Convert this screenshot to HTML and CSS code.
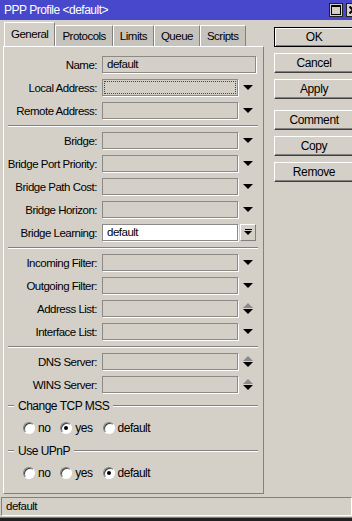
FILE: index.html
```html
<!DOCTYPE html>
<html lang="en">
<head>
  <meta charset="UTF-8" />
  <meta name="viewport" content="width=device-width, initial-scale=1.0" />
  <title>PPP Profile &lt;default&gt;</title>
  <link rel="stylesheet" href="styles.css">
</head>
<body>
  <div class="window">
    <div class="titlebar">
      <span class="title">PPP Profile &lt;default&gt;</span>
      <div class="win-buttons">
        <span class="win-btn"><span class="max-box"></span></span>
        <span class="win-btn">
          <svg width="8" height="8" viewBox="0 0 8 8"><path d="M0.5 0.5 L7.5 7.5 M7.5 0.5 L0.5 7.5" stroke="#000" stroke-width="2"/></svg>
        </span>
      </div>
    </div>

    <div class="main">
      <div class="left">
        <div class="tabs">
          <div class="tab active">General</div>
          <div class="tab">Protocols</div>
          <div class="tab">Limits</div>
          <div class="tab">Queue</div>
          <div class="tab">Scripts</div>
        </div>

        <div class="panel">
          <div class="row">
            <label>Name:</label>
            <div class="field wide">default</div>
          </div>
          <div class="row">
            <label>Local Address:</label>
            <div class="field"><span class="focus-ring"></span></div>
            <span class="arrow down"></span>
          </div>
          <div class="row">
            <label>Remote Address:</label>
            <div class="field"></div>
            <span class="arrow down"></span>
          </div>

          <div class="sep"></div>

          <div class="row">
            <label>Bridge:</label>
            <div class="field"></div>
            <span class="arrow down"></span>
          </div>
          <div class="row">
            <label>Bridge Port Priority:</label>
            <div class="field"></div>
            <span class="arrow down"></span>
          </div>
          <div class="row">
            <label>Bridge Path Cost:</label>
            <div class="field"></div>
            <span class="arrow down"></span>
          </div>
          <div class="row">
            <label>Bridge Horizon:</label>
            <div class="field"></div>
            <span class="arrow down"></span>
          </div>
          <div class="row">
            <label>Bridge Learning:</label>
            <div class="field white">default</div>
            <span class="drop-btn"><span class="bar"></span><span class="tri"></span></span>
          </div>

          <div class="sep"></div>

          <div class="row">
            <label>Incoming Filter:</label>
            <div class="field"></div>
            <span class="arrow down"></span>
          </div>
          <div class="row">
            <label>Outgoing Filter:</label>
            <div class="field"></div>
            <span class="arrow down"></span>
          </div>
          <div class="row">
            <label>Address List:</label>
            <div class="field"></div>
            <span class="arrow updown"></span>
          </div>
          <div class="row">
            <label>Interface List:</label>
            <div class="field"></div>
            <span class="arrow down"></span>
          </div>

          <div class="sep"></div>

          <div class="row">
            <label>DNS Server:</label>
            <div class="field"></div>
            <span class="arrow updown"></span>
          </div>
          <div class="row">
            <label>WINS Server:</label>
            <div class="field"></div>
            <span class="arrow updown"></span>
          </div>

          <div class="group-title">Change TCP MSS</div>
          <div class="radios">
            <span class="radio"></span><span class="radio-label">no</span>
            <span class="radio checked"></span><span class="radio-label">yes</span>
            <span class="radio"></span><span class="radio-label">default</span>
          </div>

          <div class="group-title">Use UPnP</div>
          <div class="radios">
            <span class="radio"></span><span class="radio-label">no</span>
            <span class="radio"></span><span class="radio-label">yes</span>
            <span class="radio checked"></span><span class="radio-label">default</span>
          </div>
        </div>
      </div>

      <div class="buttons">
        <button class="default">OK</button>
        <button>Cancel</button>
        <button class="gap-after">Apply</button>
        <button>Comment</button>
        <button>Copy</button>
        <button>Remove</button>
      </div>
    </div>

    <div class="status">default</div>
    <div class="bottom-edge"></div>
  </div>
</body>
</html>
```

FILE: styles.css
```css
/* Global */
body {
  margin: 0;
  padding: 0;
  background: #d4d0c8;
  font-family: "Liberation Sans", Arial, sans-serif;
  font-size: 11.5px;
  letter-spacing: -0.5px;
  color: #000;
  overflow: hidden;
}

.window {
  width: 352px;
  height: 521px;
  display: flex;
  flex-direction: column;
  overflow: hidden;
}

/* Title bar */
.titlebar {
  height: 20px;
  flex: none;
  display: flex;
  align-items: center;
  background: #4848cc;
  color: #fff;
  padding-left: 4px;
  font-size: 12px;
  letter-spacing: -0.5px;
}

.win-buttons {
  margin-left: auto;
  margin-right: -8px;
  display: flex;
  gap: 3px;
}

.win-btn {
  width: 14px;
  height: 14px;
  box-sizing: border-box;
  background: #d4d0c8;
  border: 1px solid #202020;
  display: flex;
  align-items: center;
  justify-content: center;
}

.max-box {
  width: 8px;
  height: 7px;
  border: 1px solid #000;
  border-top-width: 2px;
}

/* Main area */
.main {
  height: 476px;
  flex: none;
  display: flex;
}

.left {
  flex: none;
  width: 261px;
  min-width: 0;
  margin-left: 3px;
  display: flex;
  flex-direction: column;
}

/* Tabs */
.tabs {
  height: 26px;
  display: flex;
  align-items: flex-end;
  padding-left: 1px;
  overflow: hidden;
}

.tab {
  height: 21px;
  box-sizing: border-box;
  padding: 0 6px;
  line-height: 21px;
  font-size: 11.5px;
  background: #c6c3bc;
  border-top: 1px solid #fff;
  border-left: 1px solid #fff;
  border-right: 1px solid #808080;
}

.tab.active {
  height: 25px;
  line-height: 22px;
  background: #d4d0c8;
  margin-bottom: -1px;
  position: relative;
  z-index: 1;
}

/* Panel */
.panel {
  height: 448px;
  box-sizing: border-box;
  border: 1px solid;
  border-color: #fff #808080 #808080 #fff;
  padding-top: 9px;
}

.row {
  height: 17px;
  margin-bottom: 6px;
  display: flex;
  align-items: center;
}

.row label {
  width: 93px;
  margin-right: 5px;
  text-align: right;
  white-space: nowrap;
}

.field {
  width: 136px;
  height: 17px;
  box-sizing: border-box;
  border: 1px solid #8c8a86;
  box-shadow: 1px 1px 0 #fff;
  padding: 0 4px;
  line-height: 15px;
  position: relative;
}

.field.wide {
  width: 154px;
}

.field.white {
  background: #fff;
}

.focus-ring {
  position: absolute;
  top: 1px;
  left: 1px;
  right: 1px;
  bottom: 1px;
  border: 1px dotted #444;
}

/* Dropdown arrows */
.arrow {
  width: 18px;
  height: 17px;
  position: relative;
}

.arrow.down::after {
  content: "";
  position: absolute;
  left: 5px;
  top: 6px;
  border-left: 5px solid transparent;
  border-right: 5px solid transparent;
  border-top: 5px solid #000;
}

.arrow.updown::before {
  content: "";
  position: absolute;
  left: 5px;
  top: 3px;
  border-left: 5px solid transparent;
  border-right: 5px solid transparent;
  border-bottom: 5px solid #8a8a8a;
}

.arrow.updown::after {
  content: "";
  position: absolute;
  left: 5px;
  top: 9px;
  border-left: 5px solid transparent;
  border-right: 5px solid transparent;
  border-top: 5px solid #000;
}

.drop-btn {
  width: 16px;
  height: 17px;
  margin-left: 2px;
  box-sizing: border-box;
  border: 1px solid;
  border-color: #fff #808080 #808080 #fff;
  display: flex;
  flex-direction: column;
  align-items: center;
  padding-top: 4px;
}

.drop-btn .bar {
  width: 7px;
  height: 1px;
  background: #000;
  margin-bottom: 1px;
}

.drop-btn .tri {
  border-left: 4px solid transparent;
  border-right: 4px solid transparent;
  border-top: 4px solid #000;
}

/* Separator lines */
.sep {
  height: 0;
  border-top: 1px solid #808080;
  border-bottom: 1px solid #fff;
  margin: 0 5px 5px 4px;
}

/* Group boxes */
.group-title {
  height: 14px;
  display: flex;
  align-items: center;
  gap: 4px;
  margin: 0 5px 8px 4px;
  white-space: nowrap;
  font-size: 12px;
}

.group-title::before,
.group-title::after {
  content: "";
  height: 0;
  border-top: 1px solid #808080;
  border-bottom: 1px solid #fff;
}

.group-title::before {
  width: 6px;
}

.group-title::after {
  flex: 1;
}

.radios {
  height: 14px;
  display: flex;
  align-items: center;
  padding-left: 19px;
  margin-bottom: 9px;
}

.radio {
  width: 12px;
  height: 12px;
  box-sizing: border-box;
  border-radius: 50%;
  background: #fff;
  border: 1px solid;
  border-color: #808080 #fff #fff #808080;
  box-shadow: inset 1px 1px 0 #404040;
  position: relative;
}

.radio.checked::after {
  content: "";
  position: absolute;
  left: 3px;
  top: 3px;
  width: 4px;
  height: 4px;
  border-radius: 50%;
  background: #000;
}

.radio-label {
  margin: 0 10px 0 3px;
  font-size: 12px;
}

/* Right side buttons */
.buttons {
  flex: none;
  margin-left: 10px;
  padding-top: 7px;
  display: flex;
  flex-direction: column;
}

button {
  width: 80px;
  height: 20px;
  margin: 0 0 6px 0;
  padding: 0;
  font-family: inherit;
  font-size: 12px;
  letter-spacing: -0.4px;
  background: #d4d0c8;
  color: #000;
  border: 1px solid;
  border-color: #fff #404040 #404040 #fff;
  box-shadow: inset -1px -1px 0 #808080;
}

button.default {
  border: 1px solid #000;
  box-shadow: inset 1px 1px 0 #fff, inset -1px -1px 0 #808080;
}

button.gap-after {
  margin-bottom: 11px;
}

/* Status bar */
.status {
  height: 19px;
  flex: none;
  box-sizing: border-box;
  margin: 1px 0 0 1px;
  border: 1px solid;
  border-color: #808080 #fff #fff #808080;
  padding-left: 4px;
  line-height: 17px;
}

.bottom-edge {
  flex: none;
  margin-top: 1px;
  height: 5px;
  border-top: 1px solid #808080;
  background: #202020;
}
```
